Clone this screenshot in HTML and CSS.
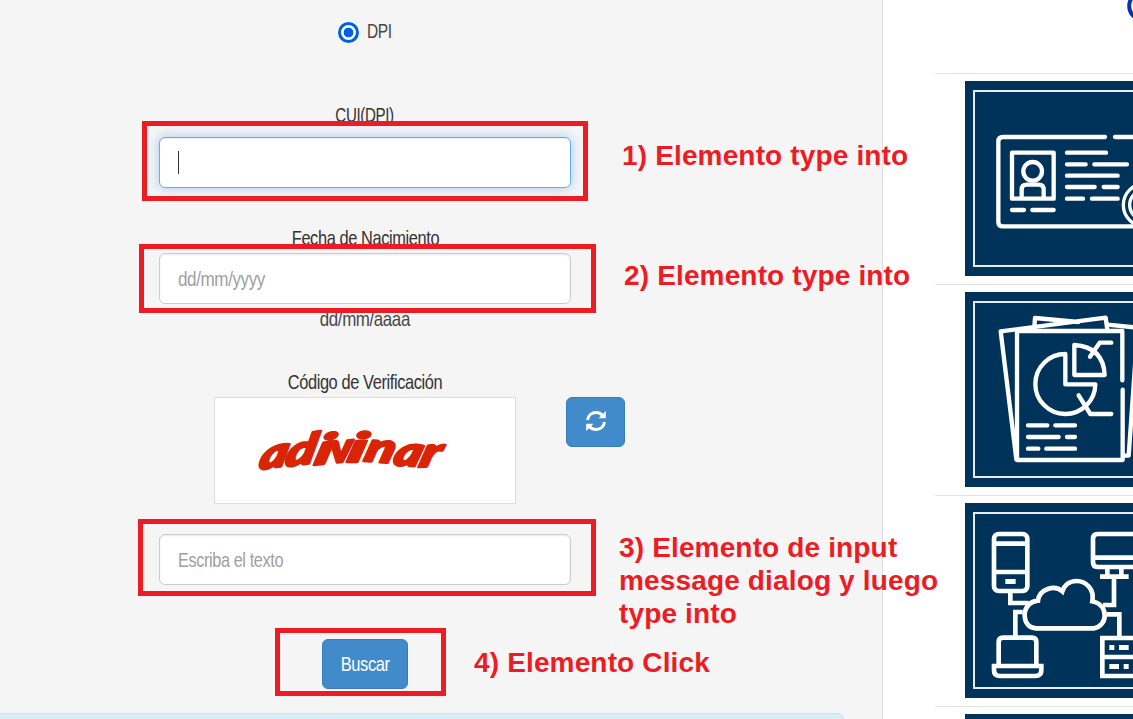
FILE: index.html
```html
<!DOCTYPE html>
<html lang="es">
<head>
<meta charset="utf-8">
<title>Consulta DPI</title>
<link rel="stylesheet" href="styles.css">
</head>
<body>
<div class="page">
  <main class="panel">
    <form class="form">
      <div class="radio-row"><span class="radio"></span><span class="narrow dpi">DPI</span></div>
      <div class="label label-cui"><span class="narrow strong cui">CUI(DPI)</span></div>
      <div class="field focused"><span class="caret"></span></div>
      <div class="label label-date"><span class="narrow strong fecha">Fecha de Nacimiento</span></div>
      <div class="field"><span class="narrow placeholder ph-date">dd/mm/yyyy</span></div>
      <div class="help"><span class="narrow aaaa">dd/mm/aaaa</span></div>
      <div class="label label-code"><span class="narrow strong codigo">Código de Verificación</span></div>
      <div class="captcha-row">
        <div class="captcha">
          <svg width="300" height="105" viewBox="215 398 300 105">
            <g class="captcha-word">
              <text transform="translate(258 470) rotate(-9) skewX(-22)" textLength="28" lengthAdjust="spacingAndGlyphs">a</text>
              <text transform="translate(284 467) rotate(-8) skewX(-20)" textLength="30" lengthAdjust="spacingAndGlyphs">d</text>
              <text transform="translate(313 465) rotate(-6) skewX(-20)" textLength="17" lengthAdjust="spacingAndGlyphs">i</text>
              <text transform="translate(330 463) rotate(-5) skewX(-4)" textLength="23" lengthAdjust="spacingAndGlyphs">v</text>
              <text transform="translate(346 462) skewX(-14)" textLength="17" lengthAdjust="spacingAndGlyphs">i</text>
              <text transform="translate(363 461) rotate(4) skewX(-12)" textLength="29" lengthAdjust="spacingAndGlyphs">n</text>
              <text transform="translate(392 465) rotate(3) skewX(-14)" textLength="27" lengthAdjust="spacingAndGlyphs">a</text>
              <text transform="translate(418 467) rotate(-2) skewX(-18)" textLength="20" lengthAdjust="spacingAndGlyphs">r</text>
            </g>
          </svg>
        </div>
        <div class="btn refresh">
          <svg width="22" height="22" viewBox="0 0 22 22">
            <path class="arc" d="M2.5 10C3.2 5.4 6.500 2.500 11 2.500c2.500 0 4.700 1 6.200 2.700M19.500 12c-.7 4.600-4 7.500-8.500 7.500-2.500 0-4.700-1-6.200-2.700"/>
            <path class="tip" d="M20.800 1v7.300h-7.300zM1.200 21v-7.300h7.300z"/>
          </svg>
        </div>
      </div>
      <div class="field field-text"><span class="narrow placeholder ph-text">Escriba el texto</span></div>
      <div class="btn submit"><span class="narrow buscar">Buscar</span></div>
    </form>
    <div class="alert"></div>
  </main>

  <aside class="sidebar">
    <header class="brand">
      <svg width="198" height="73" viewBox="935 0 198 73"><circle cx="1143" cy="6" r="13.800"/></svg>
    </header>
    <section class="tile">
      <svg class="card" viewBox="15 18 585 585">
        <rect class="frame" x="42" y="48" width="528" height="525"/>
        <g class="ico">
          <path d="M435 186H129q-14 0-14 14v240q0 14 14 14h450M465 186h120"/>
          <path d="M156 233h125v138H156zM185 369v-25q0-15 15-15h36q15 0 15 15v25"/>
          <circle cx="218" cy="289" r="28"/>
          <path d="M156 405h36M217 405h64M321 233h117M321 268h56M403 268h98M321 302h152M321 336h83M431 336h42M321 371h48M396 371h77"/>
          <circle class="seal" cx="554" cy="390" r="64"/>
          <circle class="seal" cx="554" cy="390" r="45"/>
        </g>
      </svg>
    </section>
    <section class="tile">
      <svg class="card" viewBox="15 18 585 585">
        <rect class="frame" x="42" y="48" width="528" height="525"/>
        <g class="ico">
          <path d="M487 283V135H171v387h317V311"/>
          <path d="M169 520L122 136l315-41 5 36M223 122l2-26 130 12M443 116l90 9-27 384h-14"/>
          <path d="M316 204a90 90 0 1 0 90 91h-90zM343 177v90h91q-4-84-91-90zM390 212l29-42h35M356 328l35 56h63"/>
          <path d="M204 418h58M286 418h59M204 453h92M321 453h24M204 488h31M259 488h86"/>
        </g>
      </svg>
    </section>
    <section class="tile">
      <svg class="card" viewBox="15 15 585 585">
        <rect class="frame" x="42" y="45" width="528" height="525"/>
        <g class="ico square">
          <rect x="102" y="108" width="100" height="171" rx="14"/>
          <path d="M102 137h100M102 222h100M151 284v31h55"/>
          <path class="solid" d="M136 243h31v15h-31z"/>
          <path d="M520 108H413q-14 0-14 14v71q0 14 14 14h107M399 179h121M442 213v18M484 213v18M420 236h86M462 240v81h-33"/>
          <path d="M228 391h173a38 38 0 0 0 33-38c0-22-14-38-37-43 7-35-18-61-47-61-24 0-38 15-43 31-23-21-69-7-73 28-23 2-40 19-40 43 0 25 15 40 34 40z"/>
          <path d="M188 342h-22v72M116 503v-71q0-13 13-13h87q13 0 13 13v71M102 504h142v12q0 18-18 18H120q-18 0-18-18z"/>
          <path d="M440 349h38v67M520 420h-93v114h93M427 477h93"/>
          <path class="solid" d="M448 441h15v15h-15zM477 441h29v15h-29zM448 498h29v15h-29zM491 498h15v15h-15z"/>
        </g>
      </svg>
    </section>
    <section class="tile"><div class="card"></div></section>
  </aside>
</div>

<div class="notes">
  <div class="mark mark-1"></div>
  <div class="mark mark-2"></div>
  <div class="mark mark-3"></div>
  <div class="mark mark-4"></div>
  <p class="note note-1">1) Elemento type into</p>
  <p class="note note-2">2) Elemento type into</p>
  <p class="note note-3">3) Elemento de input<br>message dialog y luego<br>type into</p>
  <p class="note note-4">4) Elemento Click</p>
</div>
</body>
</html>
```

FILE: styles.css
```css
* { box-sizing: border-box; }
html, body { margin: 0; height: 719px; overflow: hidden; }
body { background: #fff; color: #333; font-family: "Liberation Sans", Arial, sans-serif; }
svg { display: block; }

.page { display: flex; width: 1133px; height: 719px; overflow: hidden; }
.panel { flex: none; width: 883px; height: 719px; background: #f5f5f5; border-right: 1px solid #ddd; overflow: hidden; }
.form { width: 412px; margin-left: 159px; padding-top: 20px; }

.narrow { display: inline-block; font-size: 21px; line-height: 24px; color: #484848; white-space: nowrap; letter-spacing: -0.5px; transform: scaleX(var(--s)); transform-origin: center; }
.strong { color: #333; }
.dpi { --s: .74; transform-origin: left; }
.cui { --s: .72; }
.fecha { --s: .78; }
.aaaa { --s: .806; }
.codigo { --s: .78; }
.ph-date { --s: .813; }
.ph-text { --s: .775; }
.buscar { --s: .785; color: #fff; }

.radio-row { display: flex; align-items: center; height: 24px; padding-left: 179px; gap: 8px; }
.dpi { margin-top: -2px; }
.radio { width: 21px; height: 21px; border: 3px solid #0060df; border-radius: 50%; background: radial-gradient(circle, #0060df 4.500px, #fff 5.200px); }

.label, .help { display: flex; justify-content: center; height: 24px; }
.label-cui { margin-top: 59px; margin-bottom: 10px; }
.label-date { margin-top: 38px; margin-bottom: 3px; }
.help { margin-top: 3px; }
.label-code { margin-top: 39px; margin-bottom: 3px; }

.field { display: flex; align-items: center; height: 51px; padding: 0 18px; background: #fff; border: 1px solid #ccc; border-radius: 6px; box-shadow: inset 0 1px 2px rgba(0, 0, 0, .09); }
.focused { border-color: #66afe9; box-shadow: inset 0 1px 1px rgba(0, 0, 0, .075), 0 0 12px rgba(102, 175, 233, .6); }
.caret { width: 1px; height: 23px; background: #333; }
.placeholder { color: #a0a0a0; transform-origin: left; }
.field-text { margin-top: 30px; }

.captcha-row { display: flex; align-items: flex-start; margin-left: 55px; gap: 50px; width: 411px; }
.captcha { width: 302px; height: 107px; background: #fff; border: 1px solid #ddd; }
.captcha-word { font-family: Lato, sans-serif; font-size: 41px; font-style: italic; font-weight: 900; fill: #d92408; stroke: #d92408; stroke-width: 2.500px; stroke-linejoin: round; }

.btn { display: flex; align-items: center; justify-content: center; height: 50px; color: #fff; background: #428bca; border: 1px solid #357ebd; border-radius: 6px; }
.refresh { width: 59px; padding-bottom: 2px; }
.arc { fill: none; stroke: #fff; stroke-width: 3; }
.tip { fill: #fff; }
.submit { width: 86px; margin: 54px 0 0 163px; }

.alert { width: 844px; height: 50px; margin-top: 24px; background: #d9edf7; border: 1px solid #bce8f1; border-left: 0; border-radius: 0 6px 6px 0; }

.sidebar { flex: none; width: 198px; margin-left: 52px; overflow: hidden; }
.brand { height: 73px; }
.brand circle { fill: none; stroke: #0536a8; stroke-width: 4; }
.tile { height: 211px; border-top: 1px solid #e2e2e2; padding: 7px 0 0 30px; }
.card { width: 195px; height: 195px; background: #00335a; }
.frame { fill: none; stroke: #e8edf4; stroke-width: 6; }
.ico { fill: none; stroke: #fff; stroke-width: 13; stroke-linecap: round; stroke-linejoin: round; }
.square { stroke-width: 14; stroke-linecap: butt; stroke-linejoin: miter; }
.seal { stroke-width: 10; fill: #00335a; }
.solid { fill: #fff; stroke: none; }

.notes { position: absolute; inset: 0; }
.mark { position: absolute; border: 5px solid #ed1c24; }
.mark-1 { left: 142px; top: 121px; width: 446px; height: 80px; }
.mark-2 { left: 139px; top: 244px; width: 457px; height: 69px; }
.mark-3 { left: 138px; top: 519px; width: 458px; height: 77px; }
.mark-4 { left: 275px; top: 628px; width: 171px; height: 68px; }
.note { position: absolute; margin: 0; color: #ed1c24; font: bold 28px/33px "Liberation Sans", Arial, sans-serif; letter-spacing: .15px; white-space: nowrap; }
.note-1 { left: 622px; top: 139px; }
.note-2 { left: 624px; top: 259px; }
.note-3 { left: 619px; top: 531px; }
.note-4 { left: 474px; top: 646px; }
```
